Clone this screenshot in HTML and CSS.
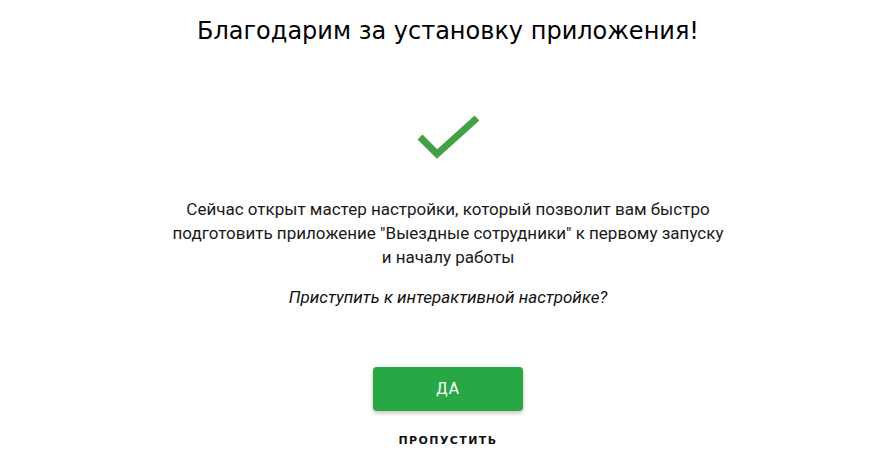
FILE: index.html
```html
<!DOCTYPE html>
<html lang="ru">
<head>
  <meta charset="UTF-8">
  <meta name="viewport" content="width=device-width, initial-scale=1.0">
  <title>Мастер настройки</title>
  <link rel="stylesheet" href="styles.css">
</head>
<body>
  <main class="wizard">
    <h1 class="wizard-title">Благодарим за установку приложения!</h1>

    <div class="wizard-icon">
      <svg width="68" height="52" viewBox="0 0 68 52">
        <path d="M6 27 L23 44 L63 8" fill="none" stroke="#43a047" stroke-width="7"/>
      </svg>
    </div>

    <p class="wizard-text">
      Сейчас открыт мастер настройки, который позволит вам быстро<br>
      подготовить приложение "Выездные сотрудники" к первому запуску<br>
      и началу работы
    </p>

    <p class="wizard-question">Приступить к интерактивной настройке?</p>

    <button class="btn-primary">Да</button>
    <button class="btn-link">Пропустить</button>
  </main>
</body>
</html>
```

FILE: styles.css
```css
/* Base */
body {
  margin: 0;
  background: #fff;
  color: #111;
  font-family: Roboto, "Liberation Sans", sans-serif;
}

.wizard {
  display: flex;
  flex-direction: column;
  align-items: center;
  text-align: center;
}

.wizard-title {
  margin: 16px 0 0;
  font-family: "DejaVu Sans", sans-serif;
  font-size: 24px;
  font-weight: 400;
  line-height: 30px;
  color: #000;
}

.wizard-icon {
  margin-top: 64px;
  height: 52px;
}

.wizard-icon svg {
  display: block;
}

.wizard-text {
  margin: 35px 0 0;
  font-size: 17px;
  line-height: 24px;
  color: #1a1a1a;
}

.wizard-question {
  margin: 16px 0 0;
  font-size: 17px;
  line-height: 24px;
  font-style: italic;
}

/* Buttons */
.btn-primary {
  margin-top: 58px;
  width: 150px;
  height: 44px;
  border: none;
  border-radius: 4px;
  background: #28a745;
  color: #fff;
  font-family: "DejaVu Sans", sans-serif;
  font-size: 15px;
  letter-spacing: 1px;
  text-transform: uppercase;
  box-shadow: 0 2px 4px rgba(0, 0, 0, 0.25);
  cursor: pointer;
}

.btn-link {
  margin-top: 23px;
  border: none;
  background: none;
  padding: 0;
  font-family: "DejaVu Sans", sans-serif;
  font-size: 11px;
  font-weight: 600;
  line-height: 14px;
  letter-spacing: 1.4px;
  text-transform: uppercase;
  color: #111;
  cursor: pointer;
}
```
